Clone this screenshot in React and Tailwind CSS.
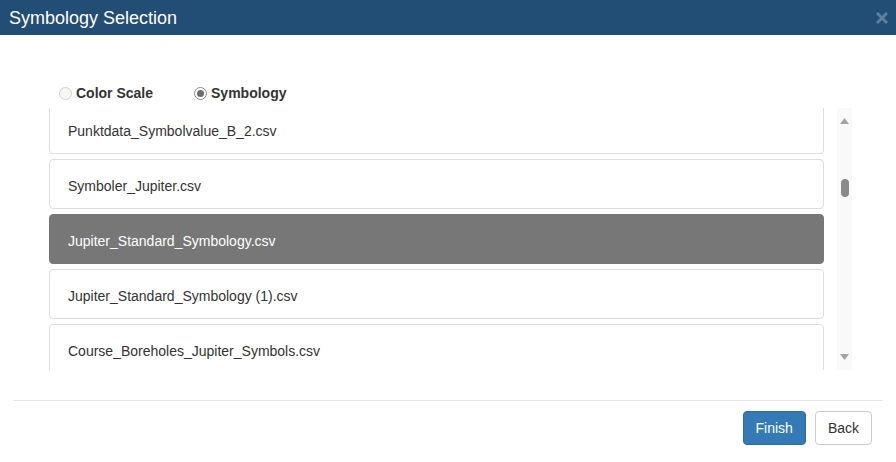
import { useState } from 'react';

const files = [
  'Punktdata_Symbolvalue_B_2.csv',
  'Symboler_Jupiter.csv',
  'Jupiter_Standard_Symbology.csv',
  'Jupiter_Standard_Symbology (1).csv',
  'Course_Boreholes_Jupiter_Symbols.csv',
];

const Radio = ({ checked }) => (
  <span
    className={`w-[13px] h-[13px] rounded-full border flex items-center justify-center mr-[4px] ${
      checked ? 'border-[#8d8d8d] bg-white' : 'border-[#d0d0d0] bg-[#f6f6f6]'
    }`}
  >
    {checked && <span className="w-[7px] h-[7px] rounded-full bg-[#6e6e6e]" />}
  </span>
);

const App = () => {
  const [selected, setSelected] = useState('Jupiter_Standard_Symbology.csv');

  return (
    <div className="w-[896px] h-[462px] bg-white flex flex-col font-['Liberation_Sans',Arial,sans-serif] text-[#333]">
      {/* Header */}
      <div className="h-[35px] bg-[#224d74] flex items-center justify-between pl-[9px] pr-[8px] shrink-0">
        <h1 className="text-white text-[18px] leading-none">Symbology Selection</h1>
        <svg width="12" height="12" viewBox="0 0 12 12" className="mt-[1px]">
          <path d="M2 2l8 8M10 2l-8 8" stroke="#5d7e9e" strokeWidth="3" strokeLinecap="square" />
        </svg>
      </div>

      {/* Body */}
      <div className="pl-[49px] pr-[44px]">
        <div className="mt-[48px] h-[20px] pl-[10px] flex items-center text-[14px] font-bold">
          <label className="flex items-center">
            <Radio />
            Color Scale
          </label>
          <label className="flex items-center ml-[41px]">
            <Radio checked />
            Symbology
          </label>
        </div>

        <div className="mt-[5px] h-[262px] flex gap-[13px]">
          <div className="flex-1 overflow-hidden">
            <div className="-mt-[4px] flex flex-col gap-[5px]">
              {files.map((f) => {
                const active = f === selected;
                return (
                  <button
                    key={f}
                    onClick={() => setSelected(f)}
                    className={`h-[50px] shrink-0 text-left pl-[18px] pt-[4px] text-[14px] rounded-[4px] border ${
                      active ? 'bg-[#777] border-[#777] text-white' : 'bg-white border-[#ddd] text-[#333]'
                    }`}
                  >
                    {f}
                  </button>
                );
              })}
            </div>
          </div>

          {/* Scrollbar */}
          <div className="w-[15px] bg-[#f9f9f9] flex flex-col items-center">
            <svg width="9" height="6" viewBox="0 0 9 6" className="mt-[10px]">
              <path d="M4.5 0L9 6H0z" fill="#a3a3a3" />
            </svg>
            <div className="mt-[55px] w-[8px] h-[18px] rounded-full bg-[#8a8a8a]" />
            <div className="flex-1" />
            <svg width="9" height="6" viewBox="0 0 9 6" className="mb-[10px]">
              <path d="M0 0h9L4.5 6z" fill="#a3a3a3" />
            </svg>
          </div>
        </div>
      </div>

      {/* Footer */}
      <div className="mx-[13px] mt-[30px] border-t border-[#e5e5e5] pt-[10px] pr-[11px] flex justify-end gap-[9px]">
        <button className="h-[34px] px-[12px] bg-[#337ab7] border border-[#2e6da4] rounded-[4px] text-white text-[14px]">
          Finish
        </button>
        <button className="h-[34px] px-[12px] bg-white border border-[#ccc] rounded-[4px] text-[#333] text-[14px]">
          Back
        </button>
      </div>
    </div>
  );
};

export default App;
